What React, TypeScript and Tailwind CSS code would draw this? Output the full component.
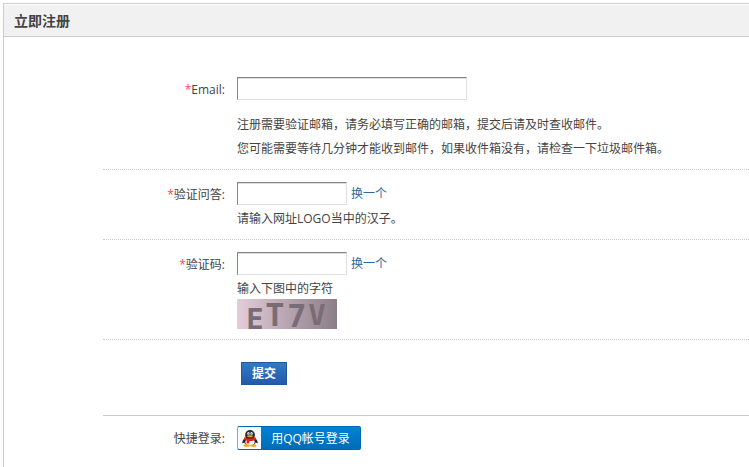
import type { ReactNode } from "react";

interface FieldRowProps {
  id: string;
  label: string;
  required?: boolean;
  className?: string;
  children: ReactNode;
}

const INPUT_CLASS =
  "h-[23px] border border-[#e0e0e0] border-t-[#848484] border-l-[#848484] bg-white px-1 text-xs shadow-[inset_0_1px_0_#dcdcdc] outline-none";

function FieldRow({ id, label, required, className = "", children }: FieldRowProps) {
  return (
    <div className={`flex gap-3 ${className}`}>
      <label htmlFor={id} className="w-[122px] shrink-0 text-right leading-[26px]">
        {required && <span className="text-[#ff4466]">*</span>}
        {label}:
      </label>
      <div className="min-w-0 flex-1">{children}</div>
    </div>
  );
}

function Captcha() {
  return (
    <svg width="100" height="30" viewBox="0 0 100 30" className="block overflow-visible" role="img" aria-label="验证码">
      <defs>
        <linearGradient id="captcha-bg" x1="0" y1="0" x2="1" y2="0">
          <stop offset="0" stopColor="#e4cdda" />
          <stop offset="1" stopColor="#8b7d87" />
        </linearGradient>
      </defs>
      <rect width="100" height="30" fill="url(#captcha-bg)" />
      <g fill="#796c76" fontFamily="'DejaVu Sans Mono', monospace" fontWeight="bold" textAnchor="middle">
        <text x="18" y="30" fontSize="29">E</text>
        <text x="38" y="27" fontSize="32">T</text>
        <text x="60" y="28" fontSize="32">7</text>
        <text x="80" y="26" fontSize="29">V</text>
      </g>
    </svg>
  );
}

function Penguin() {
  return (
    <svg width="16" height="17" viewBox="0 0 16 17" className="block">
      <path d="M3 8C1.200 9.600 0 11.500.4 13c.5.600 1.500-.2 2.400-1.200zM13 8c1.800 1.600 3 3.500 2.600 5-.5.600-1.500-.2-2.400-1.200z" fill="#222" />
      <ellipse cx="8" cy="11" rx="6" ry="5" fill="#1d1d1f" />
      <ellipse cx="8" cy="12" rx="4.700" ry="3.900" fill="#fff" />
      <ellipse cx="8" cy="5" rx="4.900" ry="5" fill="#2b2b30" />
      <ellipse cx="6.500" cy="3.600" rx="1.200" ry="1.500" fill="#fff" />
      <ellipse cx="9.500" cy="3.600" rx="1.200" ry="1.500" fill="#fff" />
      <circle cx="6.900" cy="3.800" r=".6" fill="#111" />
      <circle cx="9.100" cy="3.800" r=".6" fill="#111" />
      <ellipse cx="8" cy="6.300" rx="3" ry="1" fill="#f7a51c" />
      <path d="M2.500 7.200c3.300 1.800 7.700 1.800 11 0l.6 2.200c-2.200 1.300-4.600 1.600-6.600 1.500L7.200 13.500H4.500l.2-3c-1-.2-2-.6-2.800-1.100z" fill="#e3241b" />
      <ellipse cx="4.600" cy="15.600" rx="3.200" ry="1.300" fill="#f7a51c" />
      <ellipse cx="11.400" cy="15.600" rx="3.200" ry="1.300" fill="#f7a51c" />
    </svg>
  );
}

export default function App() {
  return (
    <main className="flex min-h-screen flex-col bg-white pt-[3px] pl-[3px] font-['Open_Sans','Noto_Sans_CJK_SC',sans-serif] text-xs text-[#444]">
      <section className="flex-1 border-t border-l border-[#ccc]">
        <h1 className="mt-px border-b border-[#ccc] bg-[#f1f1f1] px-[10px] text-sm leading-[31px] font-bold">立即注册</h1>

        <form className="pt-10 pl-[99px]" onSubmit={(e) => e.preventDefault()}>
          <FieldRow id="email" label="Email" required className="border-b border-dotted border-[#ccc] pb-2">
            <input id="email" type="text" className={`${INPUT_CLASS} block w-[230px]`} />
            <p className="mt-[13px] leading-6">
              注册需要验证邮箱，请务必填写正确的邮箱，提交后请及时查收邮件。
              <br />
              您可能需要等待几分钟才能收到邮件，如果收件箱没有，请检查一下垃圾邮件箱。
            </p>
          </FieldRow>

          <FieldRow id="answer" label="验证问答" required className="border-b border-dotted border-[#ccc] pt-3 pb-[10px]">
            <div className="flex items-center gap-1">
              <input id="answer" type="text" className={`${INPUT_CLASS} w-[110px]`} />
              <a href="#answer" className="text-[#336699]">换一个</a>
            </div>
            <p className="mt-1 leading-5">请输入网址LOGO当中的汉子。</p>
          </FieldRow>

          <FieldRow id="code" label="验证码" required className="border-b border-dotted border-[#ccc] pt-3 pb-[10px]">
            <div className="flex items-center gap-1">
              <input id="code" type="text" className={`${INPUT_CLASS} w-[110px]`} />
              <a href="#code" className="text-[#336699]">换一个</a>
            </div>
            <p className="mt-1 leading-5">输入下图中的字符</p>
            <Captcha />
          </FieldRow>

          <div className="border-b border-[#ccc] pt-[22px] pb-[30px] pl-[138px]">
            <button
              type="submit"
              className="block h-[23px] w-[46px] border border-[#235994] bg-linear-to-b from-[#2f7bc8] to-[#2459a9] text-xs leading-[22px] font-bold text-white"
            >
              提交
            </button>
          </div>

          <FieldRow id="qq-login" label="快捷登录" className="py-[10px]">
            <button
              id="qq-login"
              type="button"
              className="flex h-6 w-[124px] overflow-hidden rounded-xs border border-[#0068b0] border-l-[#85a9c5] bg-linear-to-b from-[#0083d3] to-[#006bb8] text-white"
            >
              <span className="flex h-full w-[23px] items-center justify-center bg-[#f5fafd]">
                <Penguin />
              </span>
              <span className="flex-1 leading-6">用QQ帐号登录</span>
            </button>
          </FieldRow>
        </form>
      </section>
    </main>
  );
}
